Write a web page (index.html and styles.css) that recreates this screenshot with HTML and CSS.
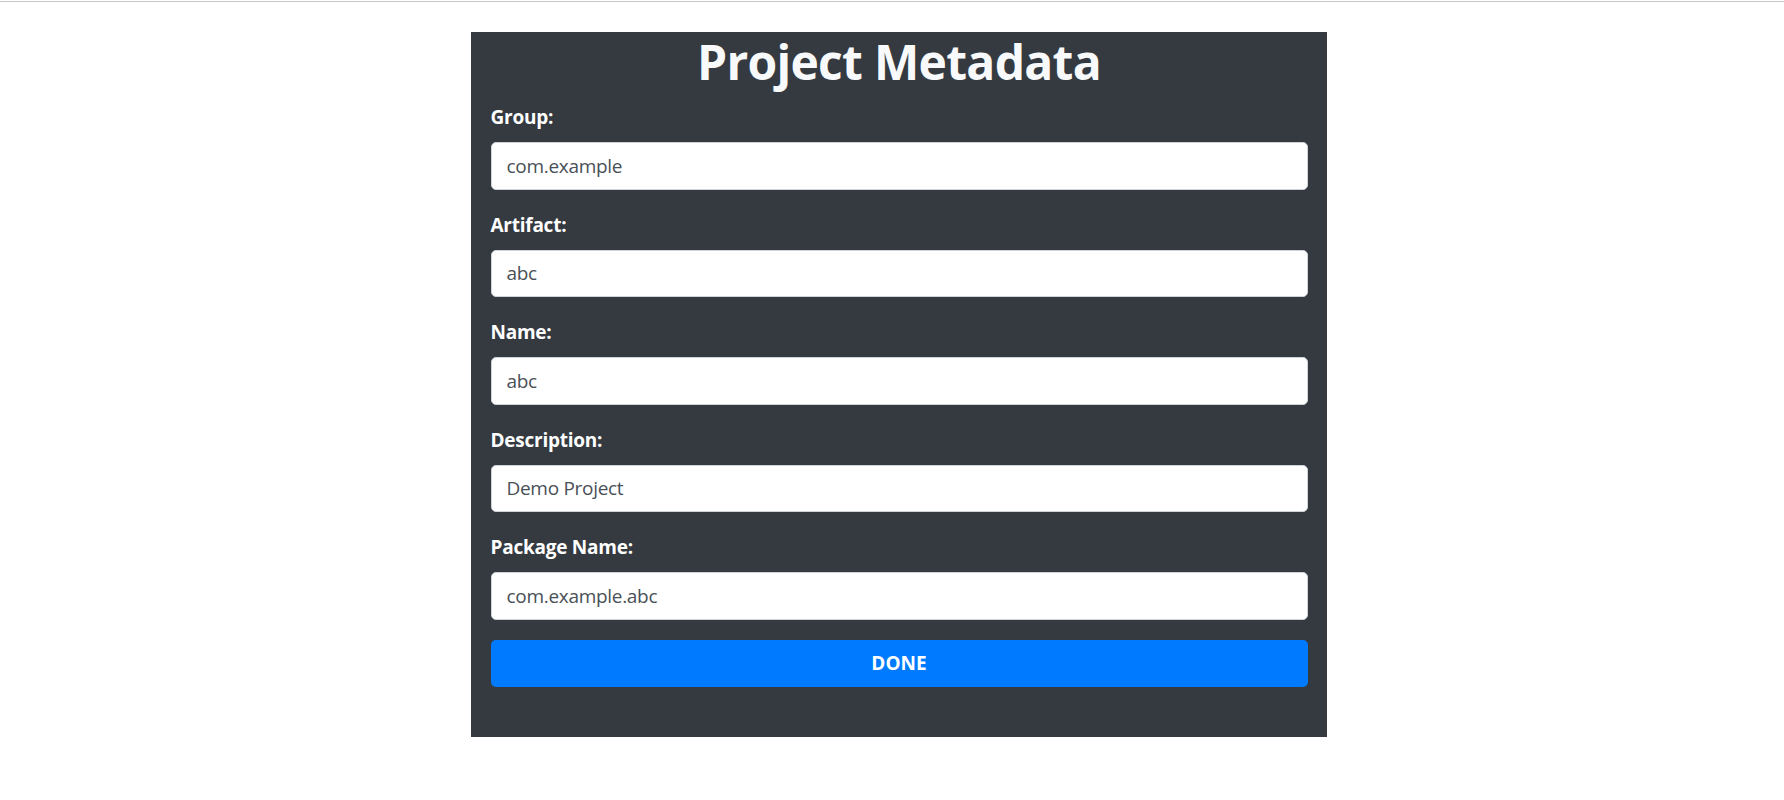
FILE: index.html
```html
<!DOCTYPE html>
<html lang="en">
<head>
<meta charset="utf-8">
<title>Project Metadata</title>
<link rel="stylesheet" href="styles.css">
</head>
<body>
<div class="topline"></div>
<main class="page">
  <section class="panel">
    <h1 class="title">Project Metadata</h1>
    <div class="form-group">
      <label class="label" for="group">Group:</label>
      <input class="control" id="group" type="text" value="com.example">
    </div>
    <div class="form-group">
      <label class="label" for="artifact">Artifact:</label>
      <input class="control" id="artifact" type="text" value="abc">
    </div>
    <div class="form-group">
      <label class="label" for="name">Name:</label>
      <input class="control" id="name" type="text" value="abc">
    </div>
    <div class="form-group">
      <label class="label" for="desc">Description:</label>
      <input class="control" id="desc" type="text" value="Demo Project">
    </div>
    <div class="form-group">
      <label class="label" for="pkg">Package Name:</label>
      <input class="control" id="pkg" type="text" value="com.example.abc">
    </div>
    <button class="done" type="button">DONE</button>
  </section>
</main>
</body>
</html>
```

FILE: styles.css
```css
html, body {
  margin: 0;
  padding: 0;
  background: #ffffff;
}

body {
  font-family: "Open Sans", "Noto Sans", "Liberation Sans", sans-serif;
}

.topline {
  height: 1px;
  margin-top: 1px;
  background: #c6c6c6;
}

.page {
  padding-top: 30px;
}

.panel {
  box-sizing: border-box;
  width: 856px;
  margin-left: calc(50% - 421px);
  padding: 0 19.5px 49.5px;
  background: #343a40;
}

.title {
  margin: 0 0 10px;
  font-size: 48px;
  line-height: 60px;
  font-weight: 700;
  text-align: center;
  color: #f8f9fa;
  letter-spacing: -0.7px;
}

.form-group {
  margin-bottom: 20px;
}

.label {
  display: block;
  margin-bottom: 10px;
  font-size: 19px;
  line-height: 30px;
  font-weight: 700;
  letter-spacing: -0.25px;
  color: #ffffff;
}

.control {
  display: block;
  box-sizing: border-box;
  width: 100%;
  height: 47.5px;
  padding: 7.5px 15px;
  font-family: inherit;
  font-size: 19px;
  line-height: 30px;
  letter-spacing: -0.3px;
  color: #495057;
  background: #ffffff;
  border: 1.25px solid #ced4da;
  border-radius: 5px;
  outline: none;
}

.done {
  display: block;
  width: 100%;
  height: 47.5px;
  padding: 0;
  font-family: inherit;
  font-size: 19px;
  font-weight: 700;
  color: #ffffff;
  background: #007bff;
  border: none;
  border-radius: 5px;
}
```
